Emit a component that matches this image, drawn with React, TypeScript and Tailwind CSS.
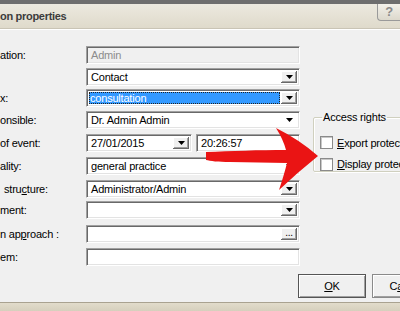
import React from 'react';

const sunken =
  'border border-t-[#a0a0a0] border-l-[#a0a0a0] border-r-white border-b-white shadow-[inset_1px_1px_0_#696969,inset_-1px_-1px_0_#e3e3e3]';
const raised =
  'bg-[#f0f0f0] shadow-[inset_-1px_-1px_0_#696969,inset_1px_1px_0_#fff,inset_-2px_-2px_0_#a0a0a0]';

const Arrow = () => (
  <svg width="7" height="4" viewBox="0 0 7 4">
    <path d="M0 0h7L3.5 4z" fill="#000" />
  </svg>
);

const DropButton = ({ flat }: { flat?: boolean }) => (
  <div className={`w-[16px] h-full flex items-center justify-center ${flat ? 'bg-white' : raised}`}>
    <Arrow />
  </div>
);

const Field = ({
  text,
  drop,
  flat,
  dots,
  disabled,
  selected,
  className = '',
}: {
  text?: string;
  drop?: boolean;
  flat?: boolean;
  dots?: boolean;
  disabled?: boolean;
  selected?: boolean;
  className?: string;
}) => (
  <div className={`h-[18px] flex p-[2px] ${disabled ? 'bg-[#f0f0f0]' : 'bg-white'} ${sunken} ${className}`}>
    <div className="flex-1 flex items-center min-w-0">
      {selected ? (
        <div className="h-full flex-1 bg-[#3399ff] text-white px-[1px] mr-[1px] flex items-center outline-1 outline-dotted outline-[#222] -outline-offset-1">
          {text}
        </div>
      ) : (
        <span className={`px-[2px] ${disabled ? 'text-[#8c8c8c]' : 'text-black'}`}>{text}</span>
      )}
    </div>
    {drop && <DropButton flat={flat} />}
    {dots && (
      <div className={`w-[16px] h-full flex items-center justify-center text-[10px] leading-none pb-[2px] ${raised}`}>...</div>
    )}
  </div>
);

const Row = ({ label, children, className = '' }: { label: React.ReactNode; children: React.ReactNode; className?: string }) => (
  <div className={`flex items-center h-[18px] ${className}`}>
    <div className="w-[86px] shrink-0 whitespace-nowrap text-black">{label}</div>
    <div className="flex-1 flex gap-[4px]">{children}</div>
  </div>
);

export default function App() {
  return (
    <div className="relative w-[400px] h-[311px] overflow-hidden flex flex-col bg-[#f0f0f0] font-['Liberation_Sans',Arial,sans-serif] text-[11px] tracking-[-0.2px] select-none">
      {/* window behind */}
      <div className="h-[4px] bg-[#6e6e6e] shrink-0" />

      {/* title bar */}
      <div className="h-[24px] shrink-0 flex items-start justify-between bg-gradient-to-b from-[#ece9df] to-[#dfdacb]">
        <div className="self-center font-bold text-[11px] text-[#3c3c3c] tracking-[-0.3px]">on properties</div>
        <div className="w-[23px] h-[17px] border border-t-0 border-r-0 border-[#9a9a9a] rounded-bl-[4px] bg-gradient-to-b from-[#f3f1ea] to-[#dcd8cc] flex items-center justify-center text-[13px] font-bold text-[#8a8a8a]">
          ?
        </div>
      </div>
      <div className="h-[1px] bg-[#c9c4b5] shrink-0" />
      <div className="h-[1px] bg-white shrink-0" />

      {/* dialog body */}
      <div className="flex-1 flex flex-col">
        <div className="flex">
          <div className="w-[300px] shrink-0 flex flex-col pt-[16px]">
            <Row label="ation:">
              <Field text="Admin" disabled className="flex-1" />
            </Row>
            <Row label="" className="mt-[4px]">
              <Field text="Contact" drop className="flex-1" />
            </Row>
            <Row label="x:" className="mt-[3px]">
              <Field text="consultation" drop selected className="flex-1" />
            </Row>
            <Row label="onsible:" className="mt-[4px]">
              <Field text="Dr. Admin Admin" drop flat className="flex-1" />
            </Row>
            <Row label="of event:" className="mt-[5px]">
              <Field text="27/01/2015" drop className="w-[106px]" />
              <Field text="20:26:57" className="flex-1" />
            </Row>
            <Row label="ality:" className="mt-[5px]">
              <Field text="general practice" drop flat className="flex-1" />
            </Row>
            <Row
              label={
                <span className="pl-[4px]">
                  stru<span className="underline">c</span>ture:
                </span>
              }
              className="mt-[5px]"
            >
              <Field text="Administrator/Admin" drop className="flex-1" />
            </Row>
            <Row label="ment:" className="mt-[3px]">
              <Field drop className="flex-1" />
            </Row>
            <Row
              label={
                <span>
                  n ap<span className="underline">p</span>roach :
                </span>
              }
              className="mt-[6px]"
            >
              <Field dots className="flex-1" />
            </Row>
            <Row label="em:" className="mt-[5px]">
              <Field className="flex-1" />
            </Row>
          </div>

          {/* access rights */}
          <div className="flex-1 pl-[13px] pt-[79px]">
            <fieldset className="border border-[#d0d0bf] rounded-[2px] shadow-[inset_1px_1px_0_#fff,1px_1px_0_#fff] w-[120px] h-[63px] pl-[6px] pt-[9px]">
              <legend className="px-[1px] ml-[2px] text-black">Access rights</legend>
              <div className="flex flex-col gap-[5px]">
                <label className="flex items-center gap-[4px] whitespace-nowrap">
                  <span className="w-[13px] h-[13px] bg-white border border-[#8a8a8a] shadow-[inset_1px_1px_0_#c8c8c8]" />
                  <span>
                    <span className="underline">E</span>xport protected
                  </span>
                </label>
                <label className="flex items-center gap-[4px] whitespace-nowrap">
                  <span className="w-[13px] h-[13px] bg-white border border-[#8a8a8a] shadow-[inset_1px_1px_0_#c8c8c8]" />
                  <span>
                    <span className="underline">D</span>isplay protected
                  </span>
                </label>
              </div>
            </fieldset>
          </div>
        </div>

        {/* buttons */}
        <div className="flex gap-[6px] pl-[298px] mt-[8px] w-[500px]">
          <button className="w-[68px] h-[24px] shrink-0 border border-[#555] bg-[#f0f0f0] shadow-[inset_1px_1px_0_#fff,inset_-1px_-1px_0_#a0a0a0] text-black">
            <span className="underline">O</span>K
          </button>
          <button className="w-[68px] h-[24px] shrink-0 border border-[#8a8a8a] bg-[#f0f0f0] shadow-[inset_1px_1px_0_#fff,inset_-1px_-1px_0_#a0a0a0] text-black">
            C<span className="underline">a</span>ncel
          </button>
        </div>
      </div>

      {/* window behind, bottom */}
      <div className="h-[1px] bg-[#a9a290] shrink-0" />
      <div className="h-[8px] bg-gradient-to-b from-[#e2dccb] to-[#d6d0bd] shrink-0" />

      {/* red annotation arrow */}
      <svg className="absolute left-0 top-0 pointer-events-none" width="400" height="311" viewBox="0 0 400 311">
        <path
          d="M206 152 C230 151 260 150 286 150 Q283 139 276 128 Q300 140 318 156 Q298 172 279 190 Q284 175 287 163 L230 162 C218 162 210 161 206 160 Z"
          fill="#ea1414"
        />
      </svg>
    </div>
  );
}
